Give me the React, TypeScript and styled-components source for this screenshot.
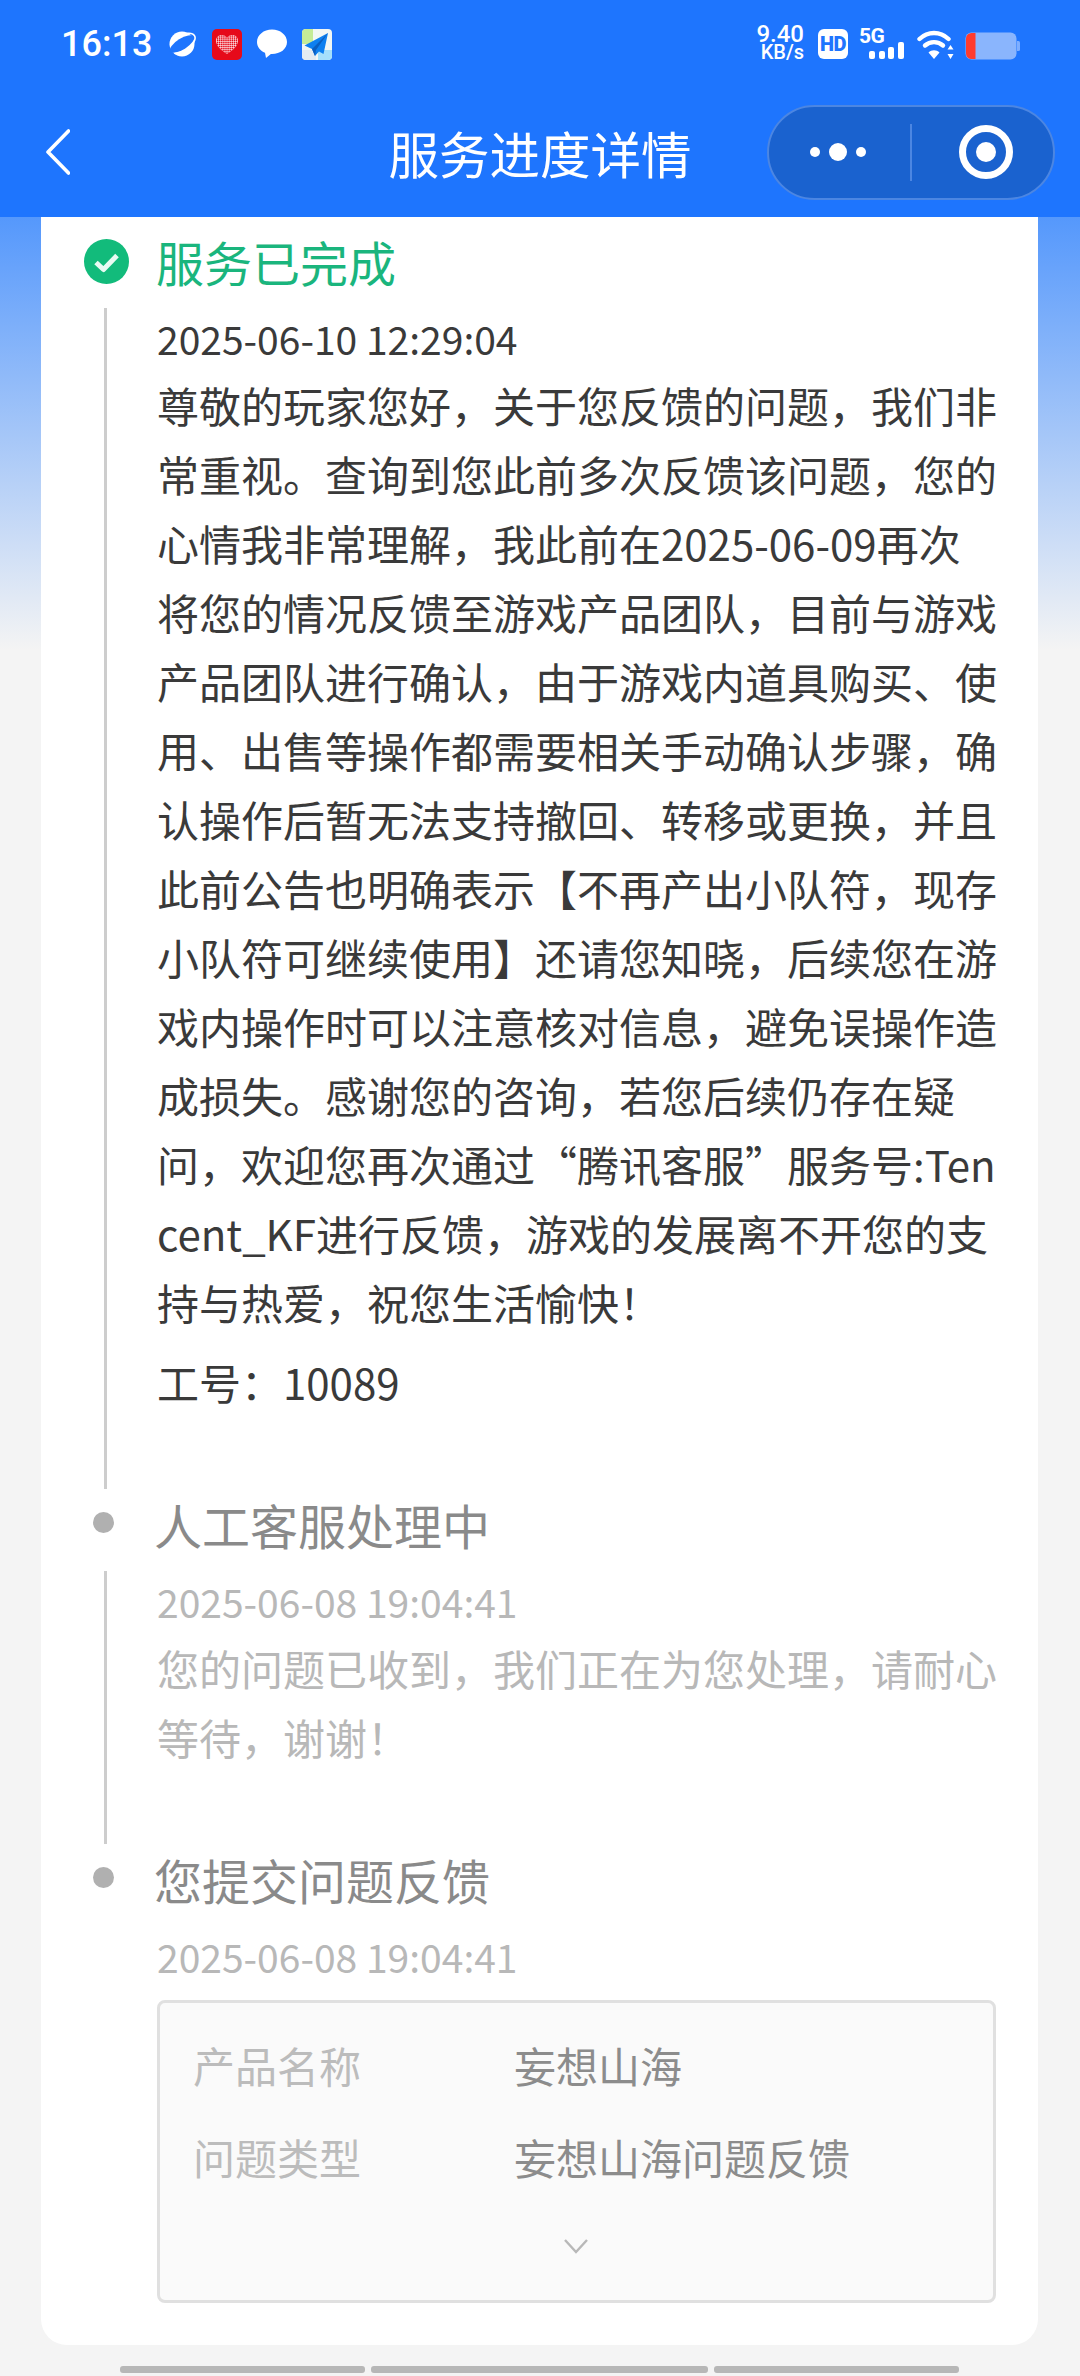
import React from "react";
import styled, { createGlobalStyle } from "styled-components";

const Global = createGlobalStyle`
  html, body { margin: 0; padding: 0; background: #f4f4f4; }
  #root { height: 2376px; overflow: hidden; }
  * { box-sizing: border-box; }
`;

const Page = styled.div`
  width: 1080px;
  height: 2376px;
  overflow: hidden;
  display: flex;
  flex-direction: column;
  background: linear-gradient(to bottom, #5598fc 217px, #f4f4f4 650px);
  font-family: "Noto Sans CJK SC", "Noto Sans", sans-serif;
`;

const Header = styled.header`
  height: 217px;
  flex: none;
  background: #1e75fe;
  color: #fff;
  display: flex;
  flex-direction: column;
`;

const StatusBar = styled.div`
  height: 87px;
  padding: 0 60px 0 61px;
  display: flex;
  justify-content: space-between;
  align-items: flex-start;
`;

const StatusLeft = styled.div`
  display: flex;
  align-items: center;
  height: 30px;
  margin-top: 29px;
`;

const Clock = styled.span`
  font: 500 36px/30px Roboto, sans-serif;
  width: 106px;
`;

const NotifyIcons = styled.div`
  display: flex;
  align-items: center;
  gap: 15px;
`;

const StatusRight = styled.div`
  display: flex;
  align-items: flex-start;
  margin-top: 24px;
`;

const Speed = styled.div`
  width: 46px;
  display: flex;
  flex-direction: column;
  align-items: flex-end;
  font-family: Roboto, sans-serif;
  font-weight: 500;
`;

const SpeedValue = styled.span`
  font-size: 24px;
  line-height: 20px;
`;

const SpeedUnit = styled.span`
  font-size: 20px;
  line-height: 17px;
`;

const HdBadge = styled.div`
  width: 30px;
  height: 30px;
  margin: 5px 0 0 14px;
  border-radius: 6px;
  background: #fff;
  color: #1e75fe;
  font: 900 20px/30px Roboto, sans-serif;
  letter-spacing: -0.5px;
  text-align: center;
`;

const Signal = styled.div`
  width: 45px;
  height: 30px;
  margin: 5px 0 0 11px;
  position: relative;
`;

const SignalLabel = styled.span`
  position: absolute;
  left: 0;
  top: 0;
  font: 700 21px/15px Roboto, sans-serif;
  letter-spacing: -0.5px;
`;

const SignalBars = styled.svg`
  position: absolute;
  right: 0;
  bottom: 0;
`;

const WifiIcon = styled.svg`
  margin: 6px 0 0 13px;
`;

const BatteryIcon = styled.svg`
  margin: 8px 0 0 11px;
`;

const NavBar = styled.div`
  flex: 1;
  display: grid;
  grid-template-columns: 1fr auto 1fr;
  align-items: center;
`;

const BackSlot = styled.div`
  padding-left: 46px;
  display: flex;
`;

const Title = styled.h1`
  margin: 0;
  font-size: 50.5px;
  font-weight: 400;
  line-height: 60px;
`;

const CapsuleSlot = styled.div`
  display: flex;
  justify-content: flex-end;
  padding-right: 25px;
`;

const Capsule = styled.div`
  width: 288px;
  height: 95px;
  border-radius: 48px;
  background: #1a62cf;
  border: 2px solid #4c86e2;
  display: flex;
  align-items: center;
`;

const MoreDots = styled.div`
  flex: 1;
  display: flex;
  align-items: center;
  justify-content: center;
  gap: 9px;
  padding-right: 3px;
`;

const Dot = styled.span<{ $size: number }>`
  width: ${(p) => p.$size}px;
  height: ${(p) => p.$size}px;
  border-radius: 50%;
  background: #fff;
`;

const CapsuleDivider = styled.span`
  width: 2px;
  height: 57px;
  background: #4c86e2;
`;

const TargetSlot = styled.div`
  width: 141px;
  display: flex;
  justify-content: center;
  padding-left: 7px;
`;

const Card = styled.main`
  flex: none;
  margin: 0 42px 0 41px;
  padding: 22px 39px 42px 0;
  height: 2128px;
  background: #fff;
  border-radius: 0 0 26px 26px;
`;

const StepHead = styled.div<{ $gapTop?: number }>`
  height: 45px;
  margin-top: ${(p) => p.$gapTop ?? 0}px;
  margin-bottom: 24px;
  display: flex;
  align-items: center;
`;

const IconSlot = styled.div`
  width: 115px;
  flex: none;
  padding-left: 43px;
  display: flex;
`;

const GreyDot = styled.span`
  width: 21px;
  height: 21px;
  margin: -5px 0 0 9px;
  border-radius: 50%;
  background: #b0b0b0;
`;

const StepTitle = styled.h2<{ $done?: boolean }>`
  margin: 0 0 0 ${(p) => (p.$done ? 0 : -2)}px;
  font-size: 48px;
  font-weight: 400;
  line-height: 45px;
  color: ${(p) => (p.$done ? "#1ab57d" : "#8a8a8a")};
`;

const StepBody = styled.div<{ $line?: boolean; $pad: number; $muted?: boolean }>`
  margin-left: 63px;
  padding: 0 0 ${(p) => p.$pad}px 50px;
  border-left: 3px solid ${(p) => (p.$line ? "#cdcdcd" : "transparent")};
  color: ${(p) => (p.$muted ? "#b8b8b8" : "#3a3a3a")};
`;

const Time = styled.div`
  font-size: 39px;
  line-height: 60px;
  margin-bottom: 2px;
  white-space: nowrap;
`;

const Paragraph = styled.p`
  margin: 0;
  font-size: 42px;
  line-height: 69px;
  word-break: break-all;
`;

const WorkNo = styled.p`
  margin: 11px 0 0;
  font-size: 42px;
  line-height: 69px;
`;

const InfoBox = styled.section`
  margin: 14px 3px 0 0;
  height: 303px;
  border: 3px solid #e0e0e0;
  border-radius: 8px;
  background: #fafafa;
  padding: 31px 33px 0;
  display: flex;
  flex-direction: column;
`;

const InfoRow = styled.div`
  height: 60px;
  margin-bottom: 32px;
  display: flex;
  align-items: center;
  font-size: 42px;
`;

const InfoLabel = styled.span`
  width: 321px;
  color: #bcbcbc;
`;

const InfoValue = styled.span`
  color: #8c8c8c;
`;

const Expand = styled.div`
  display: flex;
  justify-content: center;
  margin-top: 20px;
  padding-right: 2px;
`;

const ScrollBars = styled.div`
  margin: 21px 120px 0;
  display: flex;
  gap: 6px;
`;

const ScrollPiece = styled.span<{ $w: number }>`
  width: ${(p) => p.$w}px;
  height: 7px;
  border-radius: 3px;
  background: #b7b7b7;
`;

const PlanetGlyph = () => (
  <svg width="30" height="26" viewBox="0 0 30 26">
    <circle cx="15" cy="13" r="12.5" fill="#fff" />
    <ellipse cx="15" cy="13" rx="14" ry="5.5" transform="rotate(-32 15 13)" fill="#1e75fe" />
    <ellipse cx="15.5" cy="12.5" rx="14.5" ry="7.6" transform="rotate(-32 15 13)" fill="none" stroke="#fff" strokeWidth="1.6" strokeDasharray="30 12" />
  </svg>
);

const HeartGlyph = () => {
  const dots: React.ReactElement[] = [];
  for (let y = 0; y < 9; y++) for (let x = 0; x < 10; x++) dots.push(<circle key={`${x}-${y}`} cx={5.6 + x * 2.1} cy={7 + y * 2.1} r="0.85" fill="#e60a1a" />);
  return (
    <svg width="30" height="31" viewBox="0 0 30 31">
      <defs>
        <clipPath id="heartClip">
          <path d="M15 25 C9 21 4 17 4 11.5 C4 8 7 6 9.8 6 C12 6 14 7.2 15 9 C16 7.2 18 6 20.2 6 C23 6 26 8 26 11.5 C26 17 21 21 15 25Z" />
        </clipPath>
      </defs>
      <rect x="0" y="0" width="30" height="31" rx="5" fill="#e60a1a" />
      <g clipPath="url(#heartClip)">
        <rect width="30" height="31" fill="#fbdfe2" />
        {dots}
      </g>
    </svg>
  );
};

const BubbleGlyph = () => (
  <svg width="30" height="30" viewBox="0 0 30 30">
    <path d="M15 0.5C23.3 0.5 30 6 30 13C30 20 23.3 25 15 25C14.6 25 14.3 25 13.9 25L9 29L8 23.8C3.3 21.8 0 17.8 0 13C0 6 6.7 0.5 15 0.5Z" fill="#fff" />
  </svg>
);

const PlaneGlyph = () => (
  <svg width="30" height="31" viewBox="0 0 30 31">
    <defs>
      <clipPath id="planeClip">
        <rect width="30" height="31" rx="4" />
      </clipPath>
    </defs>
    <g clipPath="url(#planeClip)">
      <rect width="30" height="31" fill="#f2f7f4" />
      <rect width="11" height="15" fill="#c5ec97" />
      <rect x="0" y="21" width="14" height="10" fill="#e2ebf2" />
      <rect x="16" y="21" width="14" height="10" fill="#a5e0fb" />
      <path d="M26 4 L2.5 16.5 L10 20 L13 27 L17 22.5 L21.5 25 Z" fill="#0e80f0" />
      <path d="M26 4 L10 20 L13 27 L14 21 Z" fill="#0a5fc0" />
    </g>
  </svg>
);

const CheckBadge = () => (
  <svg width="45" height="45" viewBox="0 0 45 45">
    <circle cx="22.5" cy="22.5" r="22.5" fill="#12bb7b" />
    <path d="M12 23.5 L19.5 30.5 L33 16.5" fill="none" stroke="#e9fbf3" strokeWidth="5" strokeLinejoin="round" />
  </svg>
);

const bodyText =
  "尊敬的玩家您好，关于您反馈的问题，我们非常重视。查询到您此前多次反馈该问题，您的心情我非常理解，我此前在2025-06-09再次将您的情况反馈至游戏产品团队，目前与游戏产品团队进行确认，由于游戏内道具购买、使用、出售等操作都需要相关手动确认步骤，确认操作后暂无法支持撤回、转移或更换，并且此前公告也明确表示【不再产出小队符，现存小队符可继续使用】还请您知晓，后续您在游戏内操作时可以注意核对信息，避免误操作造成损失。感谢您的咨询，若您后续仍存在疑问，欢迎您再次通过“腾讯客服”服务号:Tencent_KF进行反馈，游戏的发展离不开您的支持与热爱，祝您生活愉快！";

export default function App() {
  return (
    <Page>
      <Global />
      <Header>
        <StatusBar>
          <StatusLeft>
            <Clock>16:13</Clock>
            <NotifyIcons>
              <PlanetGlyph />
              <HeartGlyph />
              <BubbleGlyph />
              <PlaneGlyph />
            </NotifyIcons>
          </StatusLeft>
          <StatusRight>
            <Speed>
              <SpeedValue>9.40</SpeedValue>
              <SpeedUnit>KB/s</SpeedUnit>
            </Speed>
            <HdBadge>HD</HdBadge>
            <Signal>
              <SignalLabel>5G</SignalLabel>
              <SignalBars width="35" height="17" viewBox="0 0 35 17" fill="#fff">
                <rect x="0" y="9" width="6" height="8" rx="2" />
                <rect x="10" y="9" width="6" height="8" rx="2" />
                <rect x="19" y="5" width="6" height="12" rx="2" />
                <rect x="29" y="0" width="6" height="17" rx="2" />
              </SignalBars>
            </Signal>
            <WifiIcon width="37" height="30" viewBox="0 0 37 30" fill="none" stroke="#fff" strokeWidth="4.4" strokeLinecap="round">
              <path d="M2.5 9C11 1 23 1 31.5 9" />
              <path d="M8 15.5C13 11 21 11 26 15.5" />
              <path d="M17 29L11.5 22.5C14.5 19.5 19.5 19.5 22.5 22.5Z" fill="#fff" stroke="none" />
              <path d="M33.5 15L30.5 19.5H36.5ZM33.5 29L30.5 24H36.5Z" fill="#fff" stroke="none" />
            </WifiIcon>
            <BatteryIcon width="55" height="28" viewBox="0 0 55 28">
              <path d="M52 9h1.5a1.5 1.5 0 0 1 1.5 1.5v7a1.5 1.5 0 0 1-1.5 1.5H52Z" fill="#7eaeff" />
              <rect x="0.5" y="0.5" width="51" height="27" rx="6" fill="#8ab5fd" />
              <path d="M6.5 1H10.5V27H6.5A5.5 5.5 0 0 1 1 21.5V6.5A5.5 5.5 0 0 1 6.5 1Z" fill="#ff3b2e" />
            </BatteryIcon>
          </StatusRight>
        </StatusBar>
        <NavBar>
          <BackSlot>
            <svg width="24" height="46" viewBox="0 0 24 46" fill="none" stroke="#fff" strokeWidth="3.6" strokeLinecap="round" strokeLinejoin="round">
              <path d="M22.5 2 L2 23 L22.5 44" />
            </svg>
          </BackSlot>
          <Title>服务进度详情</Title>
          <CapsuleSlot>
            <Capsule>
              <MoreDots>
                <Dot $size={10} />
                <Dot $size={18} />
                <Dot $size={10} />
              </MoreDots>
              <CapsuleDivider />
              <TargetSlot>
                <svg width="54" height="54" viewBox="0 0 54 54">
                  <circle cx="27" cy="27" r="23.5" fill="none" stroke="#fff" strokeWidth="7" />
                  <circle cx="27" cy="27" r="10" fill="#fff" />
                </svg>
              </TargetSlot>
            </Capsule>
          </CapsuleSlot>
        </NavBar>
      </Header>
      <Card>
        <StepHead>
          <IconSlot>
            <CheckBadge />
          </IconSlot>
          <StepTitle $done>服务已完成</StepTitle>
        </StepHead>
        <StepBody $line $pad={73}>
          <Time>2025-06-10 12:29:04</Time>
          <Paragraph>{bodyText}</Paragraph>
          <WorkNo>工号：10089</WorkNo>
        </StepBody>
        <StepHead $gapTop={13}>
          <IconSlot>
            <GreyDot />
          </IconSlot>
          <StepTitle>人工客服处理中</StepTitle>
        </StepHead>
        <StepBody $line $pad={73} $muted>
          <Time>2025-06-08 19:04:41</Time>
          <Paragraph>您的问题已收到，我们正在为您处理，请耐心等待，谢谢！</Paragraph>
        </StepBody>
        <StepHead $gapTop={13}>
          <IconSlot>
            <GreyDot />
          </IconSlot>
          <StepTitle>您提交问题反馈</StepTitle>
        </StepHead>
        <StepBody $pad={0} $muted>
          <Time>2025-06-08 19:04:41</Time>
          <InfoBox>
            <InfoRow>
              <InfoLabel>产品名称</InfoLabel>
              <InfoValue>妄想山海</InfoValue>
            </InfoRow>
            <InfoRow>
              <InfoLabel>问题类型</InfoLabel>
              <InfoValue>妄想山海问题反馈</InfoValue>
            </InfoRow>
            <Expand>
              <svg width="26" height="16" viewBox="0 0 26 16" fill="none" stroke="#b8b8b8" strokeWidth="2.4">
                <path d="M2 2 L13 14 L24 2" />
              </svg>
            </Expand>
          </InfoBox>
        </StepBody>
      </Card>
      <ScrollBars>
        <ScrollPiece $w={245} />
        <ScrollPiece $w={337} />
        <ScrollPiece $w={245} />
      </ScrollBars>
    </Page>
  );
}
